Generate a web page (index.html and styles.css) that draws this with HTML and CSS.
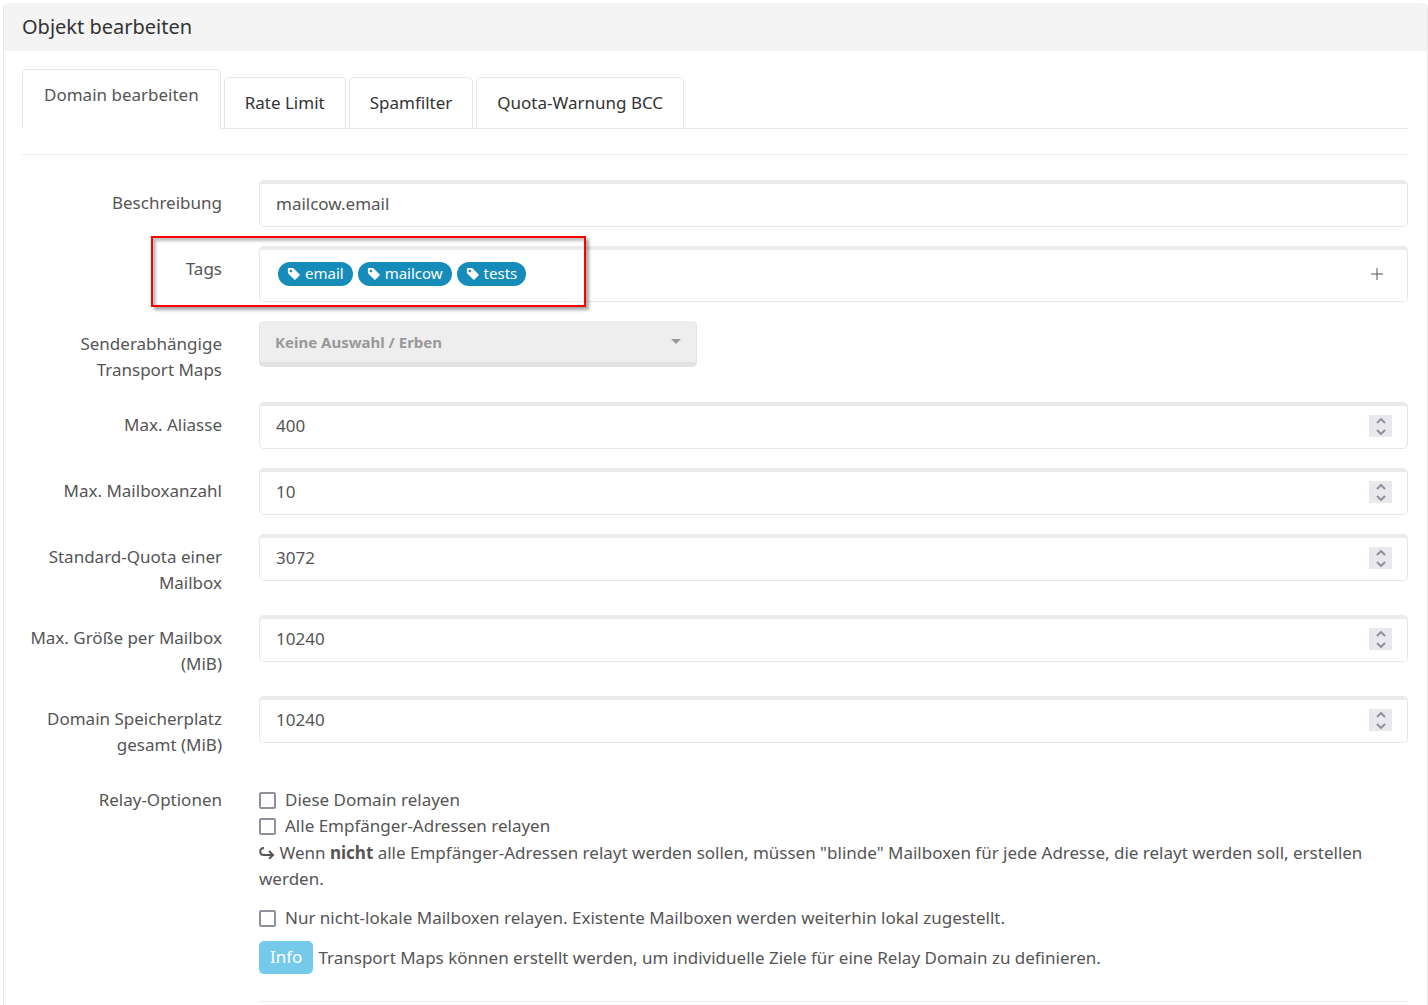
FILE: index.html
```html
<!DOCTYPE html>
<html lang="de">
<head>
<meta charset="utf-8">
<meta name="viewport" content="width=device-width, initial-scale=1">
<title>Objekt bearbeiten</title>
<link rel="stylesheet" href="styles.css">
</head>
<body>
<svg class="sprite" aria-hidden="true">
  <symbol id="icon-tag" viewBox="0 0 16 16"><path d="M2 1a1 1 0 0 0-1 1v4.586a1 1 0 0 0 .293.707l7 7a1 1 0 0 0 1.414 0l4.586-4.586a1 1 0 0 0 0-1.414l-7-7A1 1 0 0 0 6.586 1H2zm4 3.500a1.500 1.500 0 1 1-3 0 1.500 1.500 0 0 1 3 0z"/></symbol>
  <symbol id="icon-up" viewBox="0 0 10 6"><path d="M1 5l4-4 4 4" fill="none" stroke="currentColor" stroke-width="2"/></symbol>
  <symbol id="icon-down" viewBox="0 0 10 6"><path d="M1 1l4 4 4-4" fill="none" stroke="currentColor" stroke-width="2"/></symbol>
</svg>
<main class="card">
  <header class="card-header"><h1 class="card-title">Objekt bearbeiten</h1></header>
  <div class="card-body">
    <nav class="tabs">
      <a class="tab tab-active" href="#domain">Domain bearbeiten</a>
      <a class="tab" href="#ratelimit">Rate Limit</a>
      <a class="tab" href="#spamfilter">Spamfilter</a>
      <a class="tab" href="#quota">Quota-Warnung BCC</a>
    </nav>
    <hr class="rule">
    <form class="form">
      <div class="row">
        <label class="label" for="description">Beschreibung</label>
        <div class="field"><input class="input" id="description" type="text" value="mailcow.email"></div>
      </div>
      <div class="row row-marked">
        <label class="label" for="tag-input">Tags</label>
        <div class="field field-tags">
          <span class="tag"><svg class="tag-icon"><use href="#icon-tag"/></svg>email</span>
          <span class="tag"><svg class="tag-icon"><use href="#icon-tag"/></svg>mailcow</span>
          <span class="tag"><svg class="tag-icon"><use href="#icon-tag"/></svg>tests</span>
          <input class="input" id="tag-input" type="text">
          <button class="add" type="button" aria-label="Tag hinzufügen"><svg class="add-icon" viewBox="0 0 12 12"><path d="M6 0v12M0 6h12" stroke="currentColor" stroke-width="1"/></svg></button>
        </div>
        <div class="marker"></div>
      </div>
      <div class="row">
        <label class="label" for="transport">Senderabhängige Transport Maps</label>
        <div class="select-wrap">
          <select class="select" id="transport"><option>Keine Auswahl / Erben</option></select>
          <svg class="caret" viewBox="0 0 10 5" aria-hidden="true"><path d="M0 0h10L5 5z"/></svg>
        </div>
      </div>
      <div class="row">
        <label class="label" for="aliases">Max. Aliasse</label>
        <div class="field">
          <input class="input" id="aliases" type="number" value="400">
          <div class="spinner"><button class="step" type="button" aria-label="Mehr"><svg class="step-icon"><use href="#icon-up"/></svg></button><button class="step" type="button" aria-label="Weniger"><svg class="step-icon"><use href="#icon-down"/></svg></button></div>
        </div>
      </div>
      <div class="row">
        <label class="label" for="mailboxes">Max. Mailboxanzahl</label>
        <div class="field">
          <input class="input" id="mailboxes" type="number" value="10">
          <div class="spinner"><button class="step" type="button" aria-label="Mehr"><svg class="step-icon"><use href="#icon-up"/></svg></button><button class="step" type="button" aria-label="Weniger"><svg class="step-icon"><use href="#icon-down"/></svg></button></div>
        </div>
      </div>
      <div class="row">
        <label class="label" for="defquota">Standard-Quota einer Mailbox</label>
        <div class="field">
          <input class="input" id="defquota" type="number" value="3072">
          <div class="spinner"><button class="step" type="button" aria-label="Mehr"><svg class="step-icon"><use href="#icon-up"/></svg></button><button class="step" type="button" aria-label="Weniger"><svg class="step-icon"><use href="#icon-down"/></svg></button></div>
        </div>
      </div>
      <div class="row">
        <label class="label" for="maxquota">Max. Größe per Mailbox (MiB)</label>
        <div class="field">
          <input class="input" id="maxquota" type="number" value="10240">
          <div class="spinner"><button class="step" type="button" aria-label="Mehr"><svg class="step-icon"><use href="#icon-up"/></svg></button><button class="step" type="button" aria-label="Weniger"><svg class="step-icon"><use href="#icon-down"/></svg></button></div>
        </div>
      </div>
      <div class="row">
        <label class="label" for="quota-total">Domain Speicherplatz gesamt (MiB)</label>
        <div class="field">
          <input class="input" id="quota-total" type="number" value="10240">
          <div class="spinner"><button class="step" type="button" aria-label="Mehr"><svg class="step-icon"><use href="#icon-up"/></svg></button><button class="step" type="button" aria-label="Weniger"><svg class="step-icon"><use href="#icon-down"/></svg></button></div>
        </div>
      </div>
      <div class="row" role="group" aria-labelledby="relay-label">
        <span class="label" id="relay-label">Relay-Optionen</span>
        <div class="options">
          <label class="check"><input class="checkbox" type="checkbox">Diese Domain relayen</label>
          <label class="check"><input class="checkbox" type="checkbox">Alle Empfänger-Adressen relayen</label>
          <p class="hint"><svg class="hook" viewBox="0 0 16 12" aria-hidden="true"><path d="M5 1C0 1 0 8 5 8h9M10 4l4 4-4 4" fill="none" stroke="currentColor" stroke-width="2"/></svg> Wenn <b>nicht</b> alle Empfänger-Adressen relayt werden sollen, müssen "blinde" Mailboxen für jede Adresse, die relayt werden soll, erstellen werden.</p>
          <label class="check"><input class="checkbox" type="checkbox">Nur nicht-lokale Mailboxen relayen. Existente Mailboxen werden weiterhin lokal zugestellt.</label>
          <p class="info"><span class="badge">Info</span>Transport Maps können erstellt werden, um individuelle Ziele für eine Relay Domain zu definieren.</p>
          <hr class="rule rule-end">
        </div>
      </div>
    </form>
  </div>
</main>
</body>
</html>
```
FILE: styles.css
```css
*, *::before, *::after { box-sizing: border-box; }

body {
  margin: 0;
  background: #fff;
  color: #555;
  font-family: "Noto Sans", sans-serif;
  font-size: 17px;
  line-height: 26px;
}

.sprite { display: none; }

.card {
  min-height: calc(100vh - 3px);
  margin: 3px 0 0 3px;
  border: 1px solid #e7e7e7;
  border-width: 0 1px;
  border-radius: 5px 5px 0 0;
}

.card-header {
  padding: 11px 18px;
  background: #f4f4f4;
  border-radius: 5px 5px 0 0;
}

.card-title {
  margin: 0;
  color: #333;
  font-size: 20px;
  font-weight: 400;
}

.card-body { padding: 18px 19px 0 18px; }

.tabs {
  display: flex;
  align-items: flex-end;
  gap: 3px;
  border-bottom: 1px solid #e7e7e7;
}

.tab {
  padding: 12px 20px;
  border: 1px solid #e7e7e7;
  border-bottom: 0;
  border-radius: 5px 5px 0 0;
  color: #333;
  text-decoration: none;
}

.tab-active {
  margin-bottom: -1px;
  padding: 12px 21px 21px;
  background: #fff;
  color: #555;
}

.rule {
  margin: 25px 0;
  border: 0;
  border-top: 1px solid #ececec;
}

.form {
  display: grid;
  gap: 19px;
}

.row {
  display: grid;
  grid-template-columns: 200px minmax(0, 1fr);
  column-gap: 37px;
  align-items: start;
}

.row-marked { position: relative; }

.label {
  padding-top: 10px;
  text-align: right;
}

.field {
  display: flex;
  align-items: center;
  height: 47px;
  padding: 0 15px 2px;
  border: 1px solid #e7e7e7;
  border-top: 4px solid #ebebeb;
  border-radius: 5px;
  background: #fff;
}

.field-tags {
  gap: 5px;
  height: 56px;
  padding: 0 18px 4px;
}

.input {
  flex: 1;
  min-width: 0;
  height: 26px;
  padding: 0 0 0 1px;
  border: 0;
  outline: 0;
  background: none;
  color: #555;
  font: inherit;
  appearance: textfield;
}

.input::-webkit-inner-spin-button { display: none; }

.tag {
  display: flex;
  align-items: center;
  gap: 4px;
  height: 24px;
  padding: 0 9px 2px;
  border-radius: 12px;
  background: #158cba;
  color: #fff;
  font-size: 15px;
}

.tag-icon {
  width: 14px;
  height: 14px;
  margin-top: 3px;
  fill: currentColor;
}

.add {
  display: flex;
  padding: 6px;
  border: 0;
  background: none;
  color: #555;
}

.add-icon {
  width: 12px;
  height: 12px;
}

.marker {
  position: absolute;
  top: -10px;
  left: 129px;
  width: 435px;
  height: 71px;
  border: 2px solid #f00;
  box-shadow: 3px 3px 3px rgba(0, 0, 0, .35), inset 3px 3px 3px rgba(0, 0, 0, .25);
  pointer-events: none;
}

.select-wrap {
  display: grid;
  align-items: center;
  width: min(438px, 100%);
}

.select {
  grid-area: 1 / 1;
  width: 100%;
  height: 46px;
  padding: 0 15px;
  border: 1px solid #e2e2e2;
  border-width: 0 1px 5px;
  border-radius: 5px;
  background: #eee;
  color: #999;
  font: bold 15px "Noto Sans", sans-serif;
  appearance: none;
}

.caret {
  grid-area: 1 / 1;
  justify-self: end;
  width: 10px;
  height: 5px;
  margin: 0 16px 5px;
  fill: #999;
  pointer-events: none;
}

.spinner {
  display: flex;
  flex-direction: column;
  width: 23px;
  height: 22px;
  background: #e9e9ed;
}

.step {
  display: flex;
  flex: 1;
  align-items: center;
  justify-content: center;
  padding: 0;
  border: 0;
  background: none;
  color: #8f8f9d;
}

.step-icon {
  width: 10px;
  height: 6px;
}

.options { padding-top: 10px; }

.check {
  display: flex;
  align-items: center;
  gap: 9px;
}

.checkbox {
  flex: none;
  width: 17px;
  height: 17px;
  margin: 0;
  border: 2px solid #8f8f9d;
  border-radius: 2px;
  background: #fff;
  appearance: none;
}

.checkbox:checked { background: #158cba; }

.hint { margin: 1px 0 13px; }

.hook {
  width: 16px;
  height: 12px;
}

.info {
  display: flex;
  align-items: center;
  gap: 5px;
  margin: 10px 0 0;
}

.badge {
  padding: 3px 11px 4px;
  border-radius: 5px;
  background: #75caeb;
  color: #fff;
}

.rule-end { margin: 27px 0 0; }
```
